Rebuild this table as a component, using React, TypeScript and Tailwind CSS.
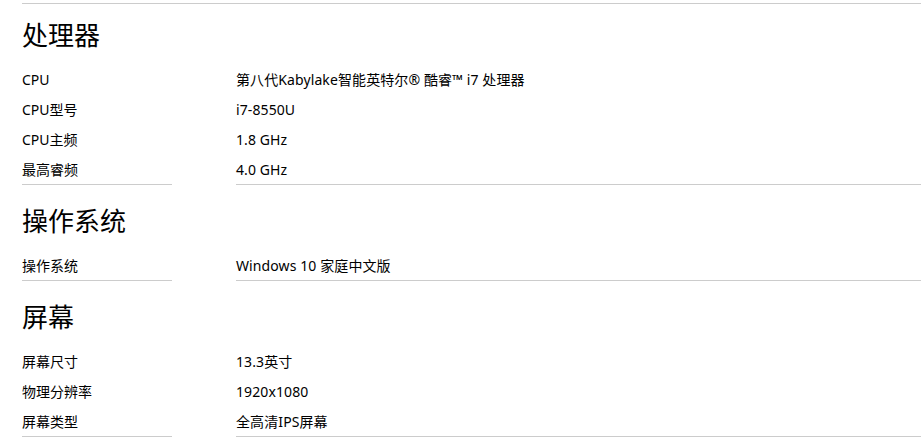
const sections = [
  {
    title: "处理器",
    first: true,
    rows: [
      ["CPU", "第八代Kabylake智能英特尔® 酷睿™ i7 处理器"],
      ["CPU型号", "i7-8550U"],
      ["CPU主频", "1.8 GHz"],
      ["最高睿频", "4.0 GHz"],
    ],
  },
  {
    title: "操作系统",
    rows: [["操作系统", "Windows 10 家庭中文版"]],
  },
  {
    title: "屏幕",
    rows: [
      ["屏幕尺寸", "13.3英寸"],
      ["物理分辨率", "1920x1080"],
      ["屏幕类型", "全高清IPS屏幕"],
    ],
  },
];

function SpecSection({ title, rows, first }: { title: string; rows: string[][]; first?: boolean }) {
  return (
    <section>
      <h2
        className={
          "text-[26px] leading-[36px] font-normal text-black " +
          (first ? "pt-[13px] pb-[11px]" : "pt-[18px] pb-[11px]")
        }
      >
        {title}
      </h2>
      <div className="flex">
        <div className="w-[150px] shrink-0 border-b border-[#cccccc]">
          {rows.map((r) => (
            <div key={r[0]} className="h-[30px] pt-[2px] leading-[28px] text-[14px] text-black">
              {r[0]}
            </div>
          ))}
        </div>
        <div className="ml-[64px] flex-1 border-b border-[#cccccc]">
          {rows.map((r) => (
            <div
              key={r[0]}
              className="h-[30px] pt-[2px] leading-[28px] text-[14px] tracking-[0.1px] text-black whitespace-nowrap"
            >
              {r[1]}
            </div>
          ))}
        </div>
      </div>
    </section>
  );
}

export default function App() {
  return (
    <div
      className="w-[921px] h-[437px] overflow-hidden bg-white pl-[22px] pt-[3px]"
      style={{ fontFamily: '"Noto Sans", "Noto Sans CJK SC", sans-serif' }}
    >
      <div className="border-t border-[#cccccc]" />
      {sections.map((s) => (
        <SpecSection key={s.title} title={s.title} rows={s.rows} first={s.first} />
      ))}
    </div>
  );
}
